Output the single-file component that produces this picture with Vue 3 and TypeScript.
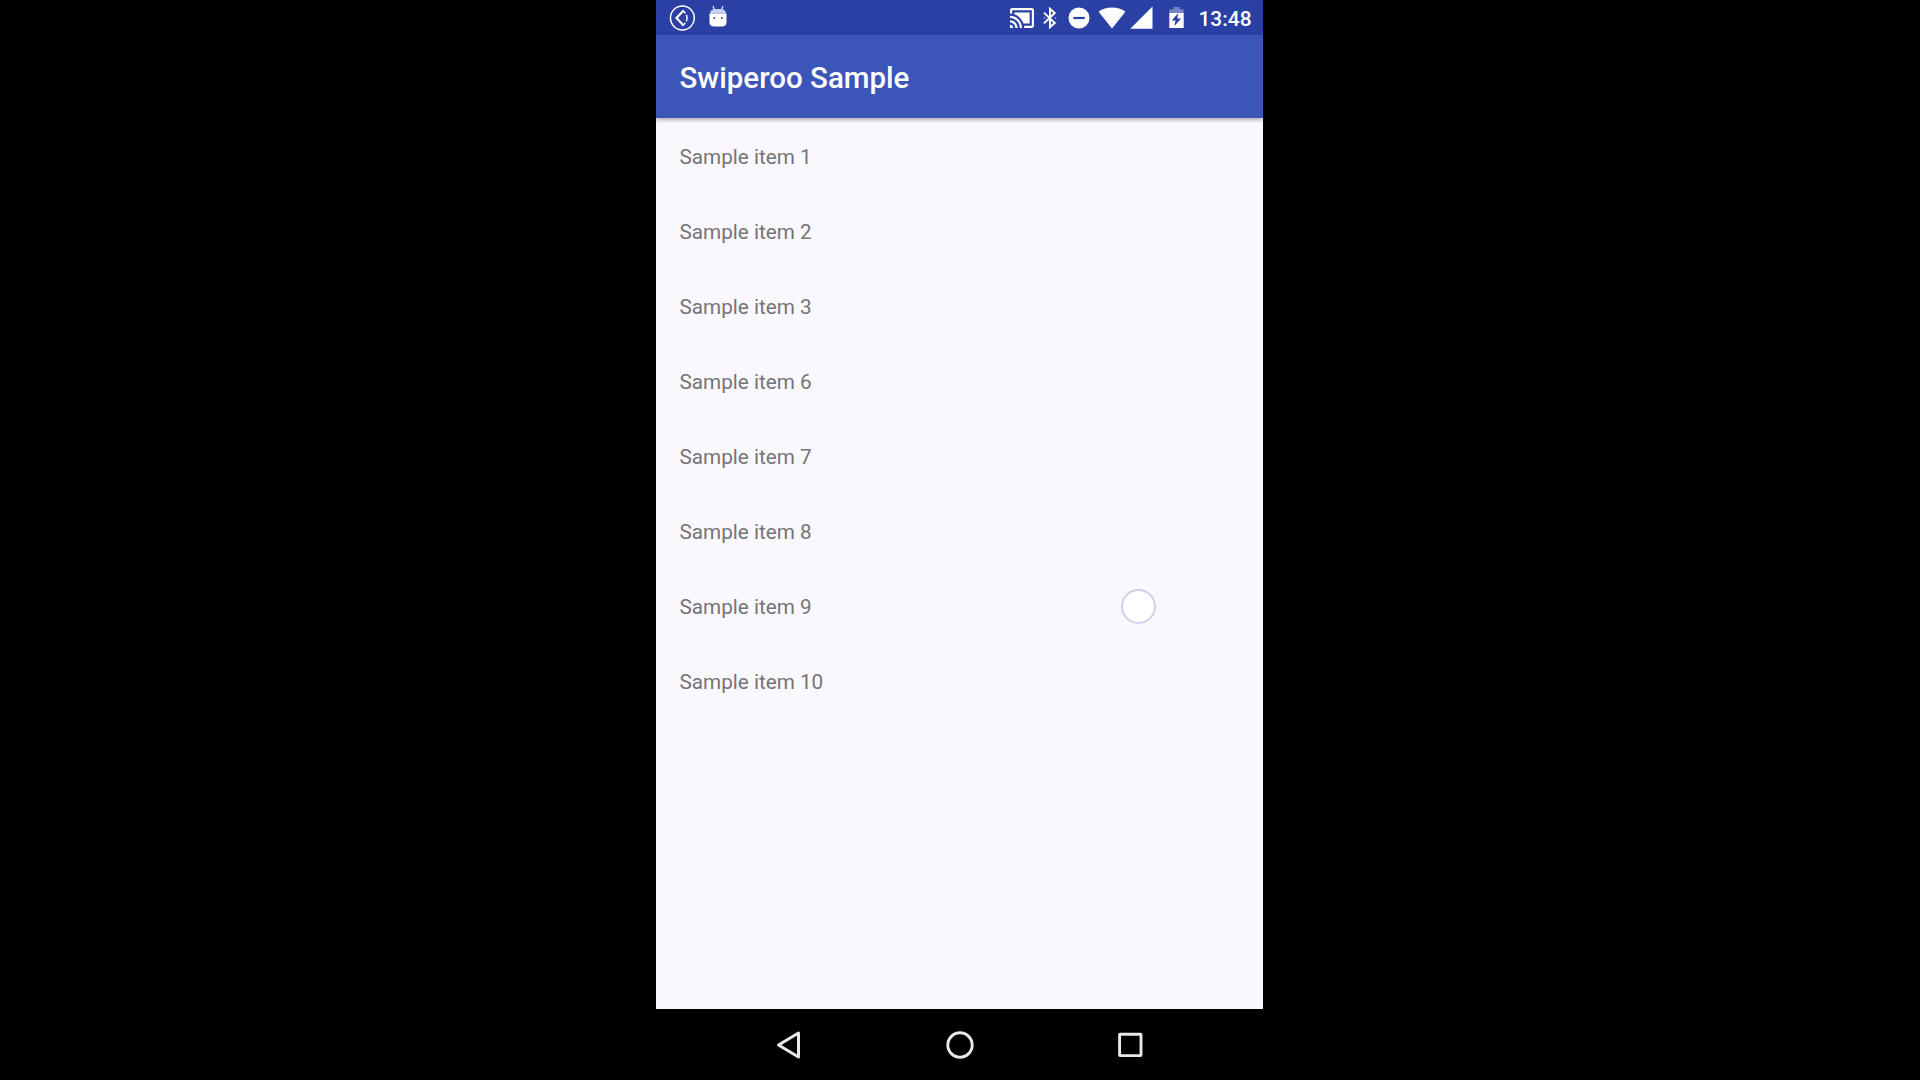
<script setup lang="ts">
const items: number[] = [1, 2, 3, 6, 7, 8, 9, 10]
</script>

<template>
  <div class="stage">
    <div class="phone">
      <header class="status">
        <svg class="rec" width="26" height="26" viewBox="0 0 26 26" fill="none" stroke="#fff">
          <circle cx="13.400" cy="13" r="11.9" stroke-width="1.500" />
          <path d="M14.600 5.500 7.500 13l7.100 7.500" stroke-width="2.200" />
          <path d="M13.600 5.200l2.800 3M13.600 20.800l2.800-3" stroke-width="1.500" />
          <path d="M17.400 9.800q1.400 3.200 0 6.400" stroke-width="1.500" />
        </svg>
        <svg class="droid" width="18" height="22" viewBox="0 0 18 22">
          <path d="M4 1l1.500 4M14 1l-1.500 4" stroke="#dfe3f8" stroke-width="1.200" />
          <path d="M1 8.500Q1.500 4 6 4h6q4.500 0 5 4.500z" fill="#c5cdf3" />
          <path d="M.5 8.500h17V17q0 4.500-5 4.500h-7q-5 0-5-4.500z" fill="#fff" />
          <circle cx="5.200" cy="13" r="1" fill="#3448ac" />
          <circle cx="12.800" cy="13" r="1" fill="#3448ac" />
        </svg>
        <div class="right">
          <svg width="24" height="20" viewBox="1 3 22 18" preserveAspectRatio="none">
            <path fill="#fff" d="M1 18v3h3c0-1.660-1.340-3-3-3zm0-4v2c2.760 0 5 2.240 5 5h2c0-3.870-3.130-7-7-7zm18-7H5v1.630c3.960 1.280 7.090 4.410 8.370 8.370H19V7zM1 10v2c4.970 0 9 4.030 9 9h2c0-6.080-4.930-11-11-11zm20-7H3c-1.100 0-2 .9-2 2v3h2V5h18v14h-7v2h7c1.100 0 2-.9 2-2V5c0-1.100-.9-2-2-2z" />
          </svg>
          <svg class="bt" width="14" height="22" viewBox="0 0 14 22" fill="none" stroke="#fff" stroke-width="2">
            <path d="M1 5.600l10.700 10.400-4.700 4.200V1.800l4.700 4.200L1 16.400" />
            <circle cx="1.500" cy="11" r="1" fill="#fff" stroke="none" opacity=".45" />
            <circle cx="12.500" cy="11" r="1" fill="#fff" stroke="none" opacity=".45" />
          </svg>
          <svg class="dnd" width="22" height="22" viewBox="0 0 22 22">
            <circle cx="11" cy="11" r="10.500" fill="#fff" />
            <rect x="5.300" y="9.900" width="11.400" height="2.200" fill="#2b40a4" />
          </svg>
          <svg class="wifi" width="28" height="22" viewBox="0 0 28 22">
            <path d="M14 21.500 .6 4.800C8 -.8 20 -.8 27.400 4.800z" fill="#fff" />
          </svg>
          <svg class="cell" width="23" height="23" viewBox="0 0 23 23">
            <path d="M22.500.4V22.700H.3z" fill="#fff" />
          </svg>
          <svg class="bat" width="15" height="22" viewBox="0 0 15 22">
            <path d="M.3 6V2.300h4.200V0h6v2.300h4.200V6z" fill="#7683c6" />
            <path d="M.3 6h14.400v15H.3z" fill="#fff" />
            <path d="M9.300 6 2.800 13.500h3.700L5.400 19l6.800-7.500H8.300z" fill="#2b40a4" />
          </svg>
          <span class="clock">13:48</span>
        </div>
      </header>
      <div class="toolbar"><h1>Swiperoo Sample</h1></div>
      <main class="content">
        <ul>
          <li v-for="n in items" :key="n">Sample item {{ n }}</li>
        </ul>
        <span class="touch"></span>
      </main>
      <nav class="nav">
        <svg width="28" height="30" viewBox="0 0 28 30">
          <path d="M3.500 15 23.500 3V27z" fill="none" stroke="#e9e9e9" stroke-width="3" stroke-linejoin="round" />
        </svg>
        <svg width="28" height="28" viewBox="0 0 28 28">
          <circle cx="14" cy="14" r="12.200" fill="none" stroke="#e9e9e9" stroke-width="2.900" />
        </svg>
        <svg width="26" height="26" viewBox="0 0 26 26">
          <rect x="2.600" y="2.200" width="21.400" height="21.400" rx=".5" fill="none" stroke="#e9e9e9" stroke-width="2.900" />
        </svg>
      </nav>
    </div>
  </div>
</template>

<style>
body {
  margin: 0;
  background: #000;
}
</style>

<style scoped>
.stage {
  width: 1920px;
  height: 1080px;
  background: #000;
  display: flex;
  justify-content: center;
  overflow: hidden;
  font-family: Roboto, "Liberation Sans", sans-serif;
}
.phone {
  width: 607px;
  margin-right: 1px;
  display: flex;
  flex-direction: column;
}
svg {
  display: block;
  flex: none;
}
.status {
  height: 35px;
  background: #2b40a4;
  display: flex;
  align-items: flex-start;
}
.rec {
  margin: 5px 0 0 13px;
}
.droid {
  margin: 5px 0 0 14px;
}
.right {
  margin-left: auto;
  display: flex;
  align-items: flex-start;
  padding-right: 11px;
}
.right > svg {
  margin-top: 8px;
}
.right > .bt {
  margin: 7px 0 0 9px;
}
.right > .dnd {
  margin: 7px 0 0 11px;
}
.right > .wifi {
  margin: 7px 0 0 8px;
}
.right > .cell {
  margin: 6px 0 0 4px;
}
.right > .bat {
  margin: 7px 0 0 16px;
}
.clock {
  width: 53.500px;
  margin: 7px 0 0 14.500px;
  color: #fff;
  font-size: 20.9px;
  line-height: 25px;
  font-weight: 500;
  white-space: nowrap;
}
.toolbar {
  height: 83px;
  background: #3c55b9;
  display: flex;
  align-items: center;
  padding: 2px 24px 0 23.5px;
  box-sizing: border-box;
  box-shadow: 0 2px 4px rgba(40, 30, 40, 0.35);
  clip-path: inset(0 0 -12px 0);
  position: relative;
  z-index: 1;
}
h1 {
  margin: 0;
  color: #fff;
  font-size: 29.5px;
  line-height: 36px;
  font-weight: 500;
}
.content {
  height: 891px;
  background: #faf8fc;
  position: relative;
}
ul {
  list-style: none;
  margin: 0;
  padding: 2px 0 0;
}
li {
  height: 75.060px;
  line-height: 75px;
  padding-left: 23.500px;
  font-size: 20.700px;
  color: #757477;
}
.touch {
  position: absolute;
  left: 464.500px;
  top: 471px;
  width: 31px;
  height: 31px;
  border: 2px solid #cdd0ec;
  border-radius: 50%;
  background: #fff;
}
.nav {
  height: 71px;
  background: #000;
  display: flex;
  align-items: center;
  justify-content: space-between;
  padding: 0 120px 0 119px;
}
</style>
